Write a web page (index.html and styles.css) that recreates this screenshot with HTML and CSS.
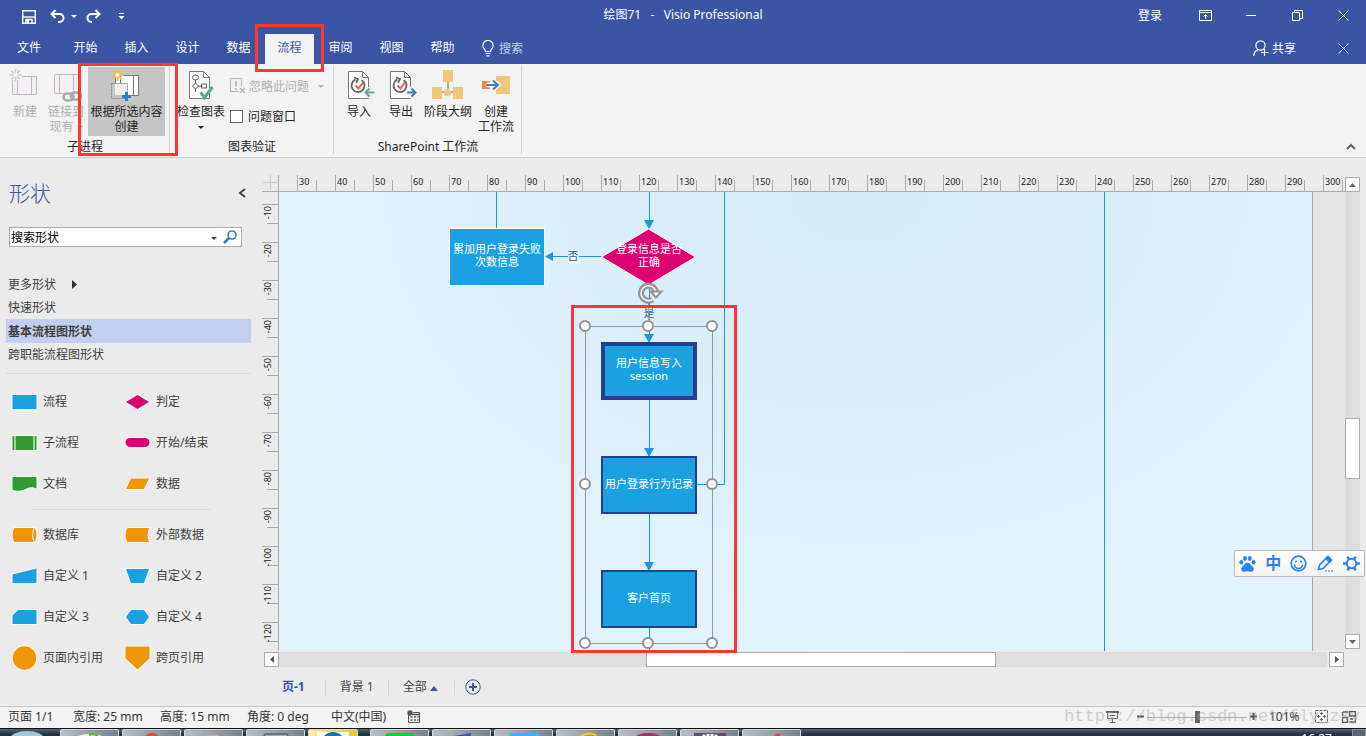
FILE: index.html
```html
<!DOCTYPE html>
<html lang="zh-CN">
<head>
<meta charset="utf-8">
<title>绘图71 - Visio Professional</title>
<link rel="stylesheet" href="styles.css">
</head>
<body>
<header class="header">
  <div class="titlebar">
    <div class="quick">
      <button class="q-save" aria-label="保存"><svg width="14" height="14" viewBox="0 0 14 14" fill="none" stroke="#fff"><path d="M.7.7h12.6v12.6H.7z" stroke-width="1.4"/><path d="M1 7h12" stroke-width="1.4"/><path d="M4 13v-3.500h6V13" stroke-width="1.400"/><path d="M5 10h2v3H5z" fill="#fff" stroke="none"/></svg></button>
      <button class="q-undo" aria-label="撤消"><svg width="15" height="15" viewBox="0 0 15 15" fill="none" stroke="#fff" stroke-width="2"><path d="M5.500 1L1.500 5l4 4"/><path d="M2 5h7.500a3.800 3.800 0 0 1 0 8H8"/></svg></button>
      <button class="q-drop" aria-label="撤消选项"><svg width="6" height="4" viewBox="0 0 6 4"><path d="M0 0h6L3 3z" fill="#fff"/></svg></button>
      <button class="q-redo" aria-label="恢复"><svg width="15" height="15" viewBox="0 0 15 15" fill="none" stroke="#fff" stroke-width="2"><path d="M9.500 1l4 4-4 4"/><path d="M13 5H5.500a3.800 3.800 0 0 0 0 8H6"/></svg></button>
      <button class="q-more" aria-label="自定义快速访问工具栏"><svg width="7" height="7" viewBox="0 0 7 7"><path d="M1 0h5v1H1zM.5 3h6L3.500 6.500z" fill="#fff"/></svg></button>
    </div>
    <h1 class="doc-title">绘图71&nbsp;&nbsp; -&nbsp;&nbsp; Visio Professional</h1>
    <div class="window-tools">
      <button class="sign-in">登录</button>
      <button class="win" aria-label="功能区显示选项"><svg width="13" height="11" viewBox="0 0 13 11" fill="none" stroke="#fff"><path d="M.5.500h12v10H.5zM.5 2.500h12M6.500 9V4.500M4.500 6.500l2-2 2 2"/></svg></button>
      <button class="win" aria-label="最小化"><svg width="11" height="11" viewBox="0 0 11 11"><path d="M0 5.500h10" stroke="#fff"/></svg></button>
      <button class="win" aria-label="还原"><svg width="11" height="11" viewBox="0 0 11 11" fill="none" stroke="#fff"><path d="M.5 2.500h7v8h-7zM2.500 2V.5h8v8H8"/></svg></button>
      <button class="win" aria-label="关闭"><svg width="11" height="11" viewBox="0 0 11 11"><path d="M.5.500l10 10M10.500.5l-10 10" stroke="#fff"/></svg></button>
    </div>
  </div>
  <nav class="tabs">
    <button class="tab tab-file">文件</button>
    <button class="tab">开始</button>
    <button class="tab">插入</button>
    <button class="tab">设计</button>
    <button class="tab">数据</button>
    <div class="marked"><button class="tab tab-active">流程</button><span class="mark mark-tab"></span></div>
    <button class="tab">审阅</button>
    <button class="tab">视图</button>
    <button class="tab">帮助</button>
    <button class="tell-me"><svg width="12" height="17" viewBox="0 0 12 17" fill="none" stroke="#fff" stroke-width="1.200"><path d="M3.500 11.500C3.500 9 .8 8.500.8 5.500a5.200 5 0 0 1 10.400 0c0 3-2.700 3.500-2.700 6z"/><path d="M3.500 13.500h5M4.500 15.800h3"/></svg><span>搜索</span></button>
    <button class="share"><svg width="16" height="17" viewBox="0 0 16 17" fill="none" stroke="#fff" stroke-width="1.200"><circle cx="7.500" cy="5.500" r="4.600"/><path d="M.8 16c0-3.500 1.800-5.500 4.200-6.200M11.500 9v7M8 12.500h7.500"/></svg>共享</button>
    <button class="win win-doc" aria-label="关闭窗口"><svg width="11" height="11" viewBox="0 0 11 11"><path d="M.5.500l10 10M10.500.5l-10 10" stroke="#fff"/></svg></button>
  </nav>
</header>

<section class="ribbon">
  <div class="group">
    <div class="group-body group-first">
      <button class="big w40" disabled>
        <svg width="32" height="36" viewBox="4 0 32 36" fill="none"><path d="M7.500 8.500h24v18h-24z" fill="#f5eff5" stroke="#bbb"/><path d="M12.500 6v20M26.500 8v18" stroke="#bbb"/><path d="M5 1h12v11H5z" fill="#f3f3f3"/><path d="M10.500 1v12M4.500 7h12M6.300 2.800l8.400 8.400M14.700 2.800l-8.400 8.400" stroke="#ccc" stroke-width="1.600"/><circle cx="10.500" cy="7" r="2.200" fill="#f3f3f3"/></svg>
        <span>新建</span></button>
      <button class="big w42" disabled>
        <svg width="32" height="36" viewBox="0 0 32 36" fill="none"><path d="M4.500 6.500h24v19h-24z" fill="#f5eff5" stroke="#bbb"/><path d="M9.500 6v19M23.500 6v19" stroke="#bbb"/><rect x="13.500" y="25.500" width="10" height="7" rx="3.500" stroke="#aaa" stroke-width="2.500"/><rect x="21" y="24.500" width="10" height="7" rx="3.500" stroke="#aaa" stroke-width="2.500"/></svg>
        <span>链接到<br>现有 <i class="caret"></i></span></button>
      <div class="marked">
        <button class="big selected">
          <svg width="32" height="36" viewBox="0 0 32 36" fill="none"><path d="M4.500 7.500h23v20h-23z" fill="#fff" stroke="#777"/><path d="M9.500 7v20M22.500 7v20" stroke="#777"/><path d="M0 15h17v16H0z" fill="#c5c5c5"/><path d="M4 15h13v12H4z" fill="#eee"/><path d="M.5 15.500h16v15H.5z" stroke="#888" stroke-dasharray="2 1"/><path d="M6.500 1v12M.5 7h12M2.300 2.800l8.400 8.400M10.700 2.800l-8.400 8.400" stroke="#f0b95c" stroke-width="2"/><circle cx="6.500" cy="7" r="2" fill="#fff"/><path d="M15.500 24v9M11 28.500h9" stroke="#3a7abd" stroke-width="3"/></svg>
          <span>根据所选内容<br>创建</span></button>
        <span class="mark mark-button"></span>
      </div>
    </div>
    <div class="group-name">子进程</div>
  </div>
  <div class="group">
    <div class="group-body group-second">
      <button class="big w54">
        <svg width="32" height="36" viewBox="0 0 32 36" fill="none" stroke="#777"><path d="M4.500 3.500h14l6 6v21h-20z" fill="#fff"/><path d="M18.500 3.500v6h6"/><ellipse cx="10.500" cy="9.500" rx="3" ry="2.500" stroke="#555"/><path d="M10.500 12v3l-3 3 3 3 3-3-3-3M13.500 18h4M16.500 16h5v4h-5zM10.500 21v3" stroke="#555"/><path d="M15.500 24.500l4 5L27.500 19" stroke="#5fa58c" stroke-width="3"/></svg>
        <span>检查图表<br><i class="caret"></i></span></button>
      <div class="stack">
        <button class="small" disabled><svg width="16" height="16" viewBox="0 0 16 16" fill="none" stroke="#b5b5b5"><path d="M.5.500h11v13H.5z" fill="#f5eff5"/><path d="M6 3v5.500M6 10v2" stroke-width="1.600"/><path d="M8.500 8.500h7v7h-7z" fill="#f3f3f3" stroke="none"/><path d="M10 10l5 5M15 10l-5 5" stroke-width="1.400"/></svg>忽略此问题<i class="caret"></i></button>
        <label class="small"><input type="checkbox">问题窗口</label>
      </div>
    </div>
    <div class="group-name">图表验证</div>
  </div>
  <div class="group">
    <div class="group-body group-third">
      <button class="big w42">
        <svg width="32" height="36" viewBox="0 0 32 36" fill="none"><path d="M5.500 3.500h14l6 6v21h-20z" fill="#fff" stroke="#777"/><path d="M19.500 3.500v6h6" stroke="#777"/><path d="M12.500 11.500a6.500 6.500 0 1 0 6 .5M11 9.500l4 1.500-2 4" stroke="#666" stroke-width="1.800"/><path d="M12.500 17.500l3 3 4.500-6" stroke="#e2633f" stroke-width="2"/><path d="M23 19h9v11h-9z" fill="#f3f3f3"/><path d="M22.500 24.500h9M26.500 20.500l-4 4 4 4" stroke="#6aa692" stroke-width="2"/></svg>
        <span>导入</span></button>
      <button class="big w42">
        <svg width="32" height="36" viewBox="0 0 32 36" fill="none"><path d="M5.500 3.500h14l6 6v21h-20z" fill="#fff" stroke="#777"/><path d="M19.500 3.500v6h6" stroke="#777"/><path d="M12.500 11.500a6.500 6.500 0 1 0 6 .5M11 9.500l4 1.500-2 4" stroke="#666" stroke-width="1.800"/><path d="M12.500 17.500l3 3 4.500-6" stroke="#e2633f" stroke-width="2"/><path d="M23 19h9v11h-9z" fill="#f3f3f3"/><path d="M22 24.500h8.500M26.500 20.500l4 4-4 4" stroke="#3f7fbd" stroke-width="2"/></svg>
        <span>导出</span></button>
      <button class="big w52">
        <svg width="32" height="36" viewBox="0 0 32 36" fill="#efc77c"><path d="M16 12v9M10 24h14" stroke="#666"/><path d="M11 2h10v12H11zM0 19h10v12H0zM21 19h10v12H21z"/><circle cx="15.500" cy="24.500" r="3.600"/></svg>
        <span>阶段大纲</span></button>
      <button class="big w44">
        <svg width="32" height="36" viewBox="0 0 32 36" fill="none"><path d="M2 13h8v8H2z" fill="#e88b44"/><path d="M16 8h14v18H16z" fill="#efc77c"/><path d="M6.500 17h11M13 12.500l5 4.500-5 4.500" stroke="#fff" stroke-width="4.500"/><path d="M6.500 17h11M13 12.500l5 4.500-5 4.500" stroke="#3f7fbd" stroke-width="2.200"/></svg>
        <span>创建<br>工作流</span></button>
    </div>
    <div class="group-name">SharePoint 工作流</div>
  </div>
  <button class="collapse" aria-label="折叠功能区"><svg width="10" height="7" viewBox="0 0 10 7"><path d="M1 6l4-4 4 4" fill="none" stroke="#666" stroke-width="2"/></svg></button>
</section>

<main class="workspace">
  <aside class="sidebar">
    <div class="side-head"><h2>形状</h2><button aria-label="最小化形状窗口"><svg width="8" height="10" viewBox="0 0 8 10"><path d="M7 1L2 5l5 4" fill="none" stroke="#444" stroke-width="2"/></svg></button></div>
    <form class="search">
      <input type="text" value="搜索形状" aria-label="搜索形状">
      <button type="button" class="search-drop" aria-label="搜索选项"><i class="caret"></i></button>
      <button type="button" class="search-go" aria-label="开始搜索"><svg width="15" height="14" viewBox="0 0 15 14" fill="none" stroke="#3d77b5"><circle cx="9" cy="5" r="4" stroke-width="1.600"/><path d="M6 8l-5 5" stroke-width="2.600"/></svg></button>
    </form>
    <ul class="stencils">
      <li><button>更多形状 <svg width="5" height="9" viewBox="0 0 5 9"><path d="M0 0l5 4.500L0 9z" fill="#333"/></svg></button></li>
      <li><button>快速形状</button></li>
      <li><button class="current">基本流程图形状</button></li>
      <li><button>跨职能流程图形状</button></li>
    </ul>
    <div class="shapes">
      <div class="shape"><svg width="25" height="24" viewBox="0 0 25 24"><path d="M.5 5h24v14H.5z" class="f-blue"/></svg>流程</div>
      <div class="shape"><svg width="25" height="24" viewBox="0 0 25 24"><path d="M12.500 5l11.500 7-11.500 7L1 12z" class="f-pink"/></svg>判定</div>
      <div class="shape"><svg width="25" height="24" viewBox="0 0 25 24"><path d="M.5 5h24v14H.5z" class="f-green"/><path d="M3 5v14M22 5v14" stroke="#c5e3c5" stroke-width="1.500"/></svg>子流程</div>
      <div class="shape"><svg width="25" height="24" viewBox="0 0 25 24"><rect x=".5" y="7" width="24" height="9" rx="4.500" class="f-pink"/></svg>开始/结束</div>
      <div class="shape"><svg width="25" height="24" viewBox="0 0 25 24"><path d="M.5 5h24v11.500c-5-2-7-1.500-11 .5s-8 2-13 1z" class="f-green"/></svg>文档</div>
      <div class="shape"><svg width="25" height="24" viewBox="0 0 25 24"><path d="M6 6.500h18L19 17H1z" class="f-orange"/></svg>数据</div>
    </div>
    <hr>
    <div class="shapes">
      <div class="shape"><svg width="25" height="24" viewBox="0 0 25 24"><path d="M2.500 5h20c2.500 3 2.500 11 0 14h-20c-2.500-3-2.500-11 0-14z" class="f-orange"/><path d="M22.500 5c-2.500 3-2.500 11 0 14" stroke="#fff" fill="none"/></svg>数据库</div>
      <div class="shape"><svg width="25" height="24" viewBox="0 0 25 24"><path d="M2.500 5h22c-2.500 3-2.500 11 0 14h-22c-2.500-3-2.500-11 0-14z" class="f-orange"/></svg>外部数据</div>
      <div class="shape"><svg width="25" height="24" viewBox="0 0 25 24"><path d="M.5 10.500l24-6V19H.5z" class="f-blue"/></svg>自定义 1</div>
      <div class="shape"><svg width="25" height="24" viewBox="0 0 25 24"><path d="M1 5h23l-5 14H6z" class="f-blue"/></svg>自定义 2</div>
      <div class="shape"><svg width="25" height="24" viewBox="0 0 25 24"><path d="M6 5h18.500v14H.5v-8.500z" class="f-blue"/></svg>自定义 3</div>
      <div class="shape"><svg width="25" height="24" viewBox="0 0 25 24"><path d="M6 5h13l5 7-5 7H6l-5-7z" class="f-blue"/></svg>自定义 4</div>
      <div class="shape"><svg width="25" height="24" viewBox="0 0 25 24"><circle cx="12.500" cy="12" r="11.800" class="f-orange"/></svg>页面内引用</div>
      <div class="shape"><svg width="25" height="24" viewBox="0 0 25 24"><path d="M.5.500h24v12l-12 11-12-11z" class="f-orange"/></svg>跨页引用</div>
    </div>
  </aside>

  <section class="editor">
    <div class="corner"><svg width="14" height="14" viewBox="0 0 14 14"><path d="M0 7.500h14M7.500 0v14" stroke="#ccc"/></svg></div>
    <div class="ruler-h"><span>30</span><span>40</span><span>50</span><span>60</span><span>70</span><span>80</span><span>90</span><span>100</span><span>110</span><span>120</span><span>130</span><span>140</span><span>150</span><span>160</span><span>170</span><span>180</span><span>190</span><span>200</span><span>210</span><span>220</span><span>230</span><span>240</span><span>250</span><span>260</span><span>270</span><span>280</span><span>290</span><span>300</span></div>
    <div class="ruler-v"><div><span>-10</span></div><div><span>-20</span></div><div><span>-30</span></div><div><span>-40</span></div><div><span>-50</span></div><div><span>-60</span></div><div><span>-70</span></div><div><span>-80</span></div><div><span>-90</span></div><div><span>-100</span></div><div><span>-110</span></div><div><span>-120</span></div></div>
    <div class="canvas">
      <div class="paper">
        <svg class="diagram" width="1033" height="460" viewBox="279 192 1033 460">
          <g fill="none" stroke="#1b98d5">
            <path d="M496.500 192v37M649.500 192v30M649.500 285v50M724.500 192v292.500H697M649.500 400v50M649.500 514v50M649.500 628v24M1104.500 192v460M602 256.500h-50"/>
          </g>
          <path d="M644 220h10l-5 9zM644 334h10l-5 9zM644 448h10l-5 9zM644 562h10l-5 9zM545 256.500l8-4.500v9z" fill="#1b98d5"/>
          <path d="M449.500 228.500h95v57h-95z" fill="#1ba1e2" stroke="#fff"/>
          <path d="M648.500 229l47 28-47 28-47-28z" fill="#dc0073" stroke="#fff"/>
          <path d="M568 250h11v13h-11z" fill="#eaf6fc"/>
          <path d="M643 307h11v12h-11z" fill="#eaf6fc"/>
          <path d="M603 344h92v54h-92z" fill="#1ba1e2" stroke="#243f92" stroke-width="4"/>
          <path d="M602 457h94v56h-94zM602 571h94v56h-94z" fill="#1ba1e2" stroke="#243f92" stroke-width="2"/>
          <g class="node-text">
            <text x="497" y="253">累加用户登录失败</text><text x="497" y="266">次数信息</text>
            <text x="649" y="253">登录信息是否</text><text x="649" y="266">正确</text>
            <text x="649" y="367">用户信息写入</text><text x="649" y="380">session</text>
            <text x="649" y="488">用户登录行为记录</text>
            <text x="649" y="602">客户首页</text>
            <text x="573" y="260" class="edge-text">否</text><text x="649" y="317" class="edge-text">是</text>
          </g>
          <path d="M585.500 326.500h127v317h-127zM648.500 326v-24" fill="none" stroke="#999"/>
          <g fill="#fff" stroke="#929292" stroke-width="2"><circle cx="585" cy="326" r="5"/><circle cx="648" cy="326" r="5"/><circle cx="712" cy="326" r="5"/><circle cx="585" cy="484" r="5"/><circle cx="712" cy="484" r="5"/><circle cx="585" cy="643" r="5"/><circle cx="648" cy="643" r="5"/><circle cx="712" cy="643" r="5"/></g>
          <g fill="none"><path d="M656 293a7.500 7.500 0 1 0-3.500 6.500" stroke="#929292" stroke-width="6"/><path d="M656 293a7.500 7.500 0 1 0-3.500 6.500" stroke="#fff" stroke-width="1.500"/><path d="M650.500 291.500h11l-5.500 6z" fill="#fff" stroke="#929292" stroke-width="2"/></g>
        </svg>
      </div>
    </div>
    <div class="scroll-v">
      <button aria-label="向上滚动"><svg width="7" height="4" viewBox="0 0 7 4"><path d="M0 4l3.500-4L7 4z" fill="#666"/></svg></button>
      <div class="track"><div class="thumb"></div></div>
      <button aria-label="向下滚动"><svg width="7" height="4" viewBox="0 0 7 4"><path d="M0 0h7L3.500 4z" fill="#666"/></svg></button>
    </div>
    <div class="scroll-h">
      <button aria-label="向左滚动"><svg width="4" height="7" viewBox="0 0 4 7"><path d="M4 0v7L0 3.500z" fill="#555"/></svg></button>
      <div class="track"><div class="thumb"></div></div>
      <button aria-label="向右滚动"><svg width="4" height="7" viewBox="0 0 4 7"><path d="M0 0v7l4-3.500z" fill="#555"/></svg></button>
    </div>
    <nav class="pages">
      <button class="page page-current">页-1</button>
      <button class="page">背景 1</button>
      <button class="page">全部 <svg width="8" height="5" viewBox="0 0 8 5"><path d="M0 5l4-5 4 5z" fill="#3955a3"/></svg></button>
      <button class="add" aria-label="插入页"><svg width="16" height="16" viewBox="0 0 16 16" fill="none" stroke="#3955a3"><circle cx="8" cy="8" r="7.200"/><path d="M8 4v8M4 8h8" stroke-width="2"/></svg></button>
    </nav>
    <span class="mark mark-selection"></span>
  </section>

  <div class="ime">
    <button aria-label="输入法"><svg width="17" height="16" viewBox="0 0 17 16" fill="#2f80f7"><ellipse cx="2.300" cy="6.200" rx="1.900" ry="2.300"/><ellipse cx="6" cy="2.500" rx="1.900" ry="2.400"/><ellipse cx="10.800" cy="2.500" rx="1.900" ry="2.400"/><ellipse cx="14.600" cy="6.200" rx="1.900" ry="2.300"/><path d="M8.500 6.500c2 0 3 2.500 5 4s2 5-1.500 5.200c-1.500 0-2-.5-3.500-.5s-2 .5-3.500.5C1.500 15.500 1.500 12 3.500 10.500s3-4 5-4z"/></svg></button>
    <button class="ime-lang">中</button>
    <button aria-label="表情"><svg width="17" height="17" viewBox="0 0 17 17" fill="none" stroke="#2f80f7" stroke-width="1.700"><circle cx="8.500" cy="8.500" r="7.300"/><path d="M4.500 9.500a4 4 0 0 0 8 0M5 6.500h2M10 6.500h2"/></svg></button>
    <button aria-label="手写"><svg width="17" height="17" viewBox="0 0 17 17" fill="none" stroke="#2f80f7" stroke-width="1.700"><path d="M1.500 14.500l1-4.500L10.500 2l3.500 3.500L6 13.500z"/><path d="M9 3.500L12.500 7l2-2L11 1.500z" fill="#2f80f7"/><path d="M8 16h8" stroke-width="1" stroke-dasharray="2 1"/></svg></button>
    <button aria-label="设置"><svg width="17" height="17" viewBox="0 0 17 17" fill="none" stroke="#2f80f7"><circle cx="8.500" cy="8.500" r="4.700" stroke-width="2"/><path d="M0 8.500h3.500M13.500 8.500H17M4.500 1.700L6 4.500M12.500 1.700L11 4.500M4.500 15.300L6 12.500M12.500 15.300L11 12.500" stroke-width="2.600"/></svg></button>
  </div>
</main>

<footer class="status">
  <span class="s-page">页面 1/1</span><span class="s-size">宽度: 25 mm</span><span class="s-size">高度: 15 mm</span><span class="s-size s-angle">角度: 0 deg</span><span class="s-lang">中文(中国)</span>
  <svg width="13" height="13" viewBox="0 0 13 13" fill="none" stroke="#555"><path d="M1.500 5v7.500h11v-10H6"/><path d="M5 4.500h7M3.500 7h2M7 7h2M10 7h1.500M3.500 10h2M7 10h2M10 10h1.500" stroke-width="1.500"/><circle cx="3" cy="3" r="2.700" fill="#555" stroke="none"/></svg>
  <div class="view-tools">
    <button aria-label="演示模式"><svg width="13" height="12" viewBox="0 0 13 12" fill="none" stroke="#666"><path d="M0 1h13" stroke-width="2"/><path d="M1.500 2v5.500h10V2M3.500 4.500h6M6.500 8v3M3.500 11.500h6"/></svg></button>
    <button class="z-out" aria-label="缩小"><svg width="7" height="7" viewBox="0 0 7 7"><path d="M0 3.500h7" stroke="#555" stroke-width="2"/></svg></button>
    <input type="range" min="0" max="100" value="51" aria-label="缩放">
    <button class="z-in" aria-label="放大"><svg width="7" height="7" viewBox="0 0 7 7"><path d="M0 3.500h7M3.500 0v7" stroke="#555" stroke-width="2"/></svg></button>
    <button class="z-value">101%</button>
    <button class="z-fit" aria-label="调整页面以适合窗口"><svg width="13" height="13" viewBox="0 0 13 13" fill="none" stroke="#666"><path d="M.5.500h12v12H.5z" stroke-dasharray="3 1"/><path d="M6.500 2v3M5 3.500h3M6.500 8v3M5 9.500h3M2 6.500h3M3.500 5v3M8 6.500h3M9.500 5v3"/></svg></button>
    <button aria-label="切换窗口"><svg width="14" height="12" viewBox="0 0 14 12" fill="none" stroke="#555"><path d="M1 1h5M.5 1v4M7.500 5h6V.5h-6zM.5 6.500h5v5h-5zM7.500 11h6V6.500M8 8h3" stroke-width="1.400"/></svg></button>
    <span class="watermark">https://blog.csdn.net/fly_zxy</span>
  </div>
</footer>

<div class="taskbar">
  <div class="orb"></div>
  <div class="task"><svg width="34" height="8" viewBox="0 0 34 8"><ellipse cx="17" cy="8" rx="14" ry="4" fill="#f2f5f2"/><path d="M16 5c5-2 10 0 9 4" stroke="#57b52e" stroke-width="2" fill="none"/></svg></div>
  <div class="task"><svg width="20" height="8" viewBox="0 0 20 8"><circle cx="10" cy="12" r="9" fill="#dc4a3a"/></svg></div>
  <div class="task"><svg width="20" height="8" viewBox="0 0 20 8"><path d="M2 5h12v3H2z" fill="#d9b25c"/></svg></div>
  <div class="task"><svg width="26" height="8" viewBox="0 0 26 8"><rect x="1" y="4" width="24" height="8" rx="2" fill="#aaa" stroke="#444"/></svg></div>
  <div class="task task-gold"><svg width="32" height="8" viewBox="0 0 32 8"><path d="M0 2h32v6H0z" fill="#fff"/><circle cx="16" cy="14" r="10" fill="none" stroke="#1e6fa8" stroke-width="4"/></svg></div>
  <div class="task"><svg width="30" height="8" viewBox="0 0 30 8"><rect y="3" width="30" height="8" rx="4" fill="#06d33d"/></svg></div>
  <div class="task"><svg width="24" height="8" viewBox="0 0 24 8"><path d="M4 6l17-3v5H4z" fill="#3955a3"/></svg></div>
  <div class="task"><svg width="30" height="8" viewBox="0 0 30 8"><rect y="3" width="30" height="8" rx="4" fill="#38b4ff"/></svg></div>
  <div class="task"><svg width="30" height="8" viewBox="0 0 30 8"><path d="M5 9c6-5 18-8 20-3" stroke="#f4cb20" stroke-width="2" fill="none"/></svg></div>
  <div class="task"><svg width="26" height="8" viewBox="0 0 26 8"><ellipse cx="13" cy="7" rx="12" ry="4" fill="#a8316d"/></svg></div>
  <div class="task"><svg width="32" height="8" viewBox="0 0 32 8"><path d="M0 3h32v5H0z" fill="#694a70"/><path d="M8 8l3-3M14 4v4M18 4v4M24 8l-3-3" stroke="#fff" stroke-width="3"/></svg></div>
  <div class="task"><svg width="20" height="8" viewBox="0 0 20 8"><path d="M11 8l3-4h4v4z" fill="#e7402c"/></svg></div>
  <time class="clock">16:27</time>
  <div class="show-desktop"></div>
</div>
</body>
</html>
```
FILE: styles.css
```css
* { box-sizing: border-box; }

body {
  margin: 0;
  height: 100vh;
  display: flex;
  flex-direction: column;
  overflow: hidden;
  background: #ebebeb;
  color: #262626;
  font: 12px/15px "Noto Sans", "Noto Sans CJK SC", sans-serif;
}

button {
  border: 0;
  padding: 0;
  margin: 0;
  background: none;
  color: inherit;
  font: inherit;
  white-space: nowrap;
}

svg { flex: none; }

.caret {
  display: inline-block;
  border: 3px solid transparent;
  border-top-color: currentColor;
  border-bottom: 0;
  vertical-align: 2px;
}

.marked { position: relative; display: flex; }
.mark { position: absolute; border: 3px solid #fe3534; pointer-events: none; z-index: 5; }
.mark-tab { left: -9px; top: -10px; width: 69px; height: 48px; }
.mark-button { left: -9px; top: -4px; width: 100px; height: 93px; }
.mark-selection { left: 309px; top: 147px; width: 166px; height: 348px; }

/* Title bar and tabs */
.header { background: #3955a3; color: #fff; }
.titlebar { display: grid; grid-template-columns: 1fr auto 1fr; height: 30px; }
.quick { display: flex; padding-left: 14px; }
.quick button, .win { display: flex; align-items: center; justify-content: center; }
.quick button { padding-top: 3px; }
.q-save { width: 30px; }
.q-undo { width: 26px; }
.q-drop { width: 7px; }
.q-redo { width: 32px; }
.q-more { width: 24px; }
.doc-title { margin: 0; font-size: 12px; font-weight: 400; line-height: 30px; }
.window-tools { display: flex; justify-content: flex-end; }
.sign-in { width: 64px; }
.win { width: 46px; }
.win-doc { padding-bottom: 2px; }

.tabs { display: flex; height: 34px; padding-top: 4px; }
.tab { width: 51px; padding-bottom: 3px; }
.tab-file { width: 58px; margin-right: 2px; }
.tab-active { width: 49px; margin: 0 1px; background: #f3f3f3; color: #3955a3; }
.tell-me { display: flex; align-items: center; gap: 5px; padding: 0 0 2px 14px; color: #c5d0ea; }
.share { display: flex; align-items: center; gap: 3px; margin-left: auto; padding: 0 24px 2px 0; }

/* Ribbon */
.ribbon { display: flex; background: #f3f3f3; border-bottom: 1px solid #d0d0d0; }
.group { margin-bottom: 3px; padding-top: 3px; position: relative; }
.group::after { content: ""; position: absolute; right: 0; top: 1px; bottom: 0; border-right: 1px solid #d4d4d4; }
.group-body { display: flex; min-height: 69px; }
.group-first { padding: 0 5px; }
.group-second { padding: 0 10px 0 4px; }
.group-third { padding: 0 4px; }
.big { display: flex; flex-direction: column; align-items: center; padding: 1px 0 2px; }
.big:disabled, .small:disabled { color: #b1b1b1; }
.w40 { width: 40px; }
.w42 { width: 42px; }
.w44 { width: 44px; }
.w52 { width: 52px; }
.w54 { width: 54px; }
.selected { width: 77px; margin-left: 1px; background: #c5c5c5; }
.stack { display: flex; flex-direction: column; gap: 14px; padding: 11px 0 0 2px; }
.small { display: flex; align-items: center; gap: 3px; height: 16px; }
.small .caret { margin-left: 6px; }
.small input { appearance: none; width: 13px; height: 13px; margin: 0 2px 0 0; border: 1px solid #666; background: #fff; }
.group-name { padding-top: 3px; text-align: center; }
.collapse { margin-left: auto; align-self: flex-end; padding: 0 10px 4px; }

/* Shapes pane */
.workspace { position: relative; flex: 1; min-height: 0; display: flex; }
.sidebar { flex: none; width: 262px; padding: 19px 11px 0 6px; color: #404040; }
.side-head { display: flex; justify-content: space-between; align-items: center; height: 32px; padding: 0 5px 0 3px; }
.side-head h2 { margin: 0; color: #3955a3; font-size: 21px; font-weight: 300; line-height: 30px; }
.search { display: flex; height: 20px; margin: 18px 9px 0 3px; border: 1px solid #ababab; background: #fff; }
.search input { flex: 1; min-width: 0; border: 0; padding: 0 1px; background: none; color: #000; font: inherit; outline: 0; }
.search-drop { width: 10px; }
.search-go { width: 22px; }
.search-go svg { display: block; margin: 0 auto; }
.stencils { list-style: none; margin: 26px 0 0; padding: 0 0 7px; border-bottom: 1px solid #dcdcdc; }
.stencils button { display: flex; align-items: center; gap: 16px; width: 100%; height: 23px; padding: 0 2px; text-align: left; }
.stencils .current { height: 24px; background: #c3cef1; font-weight: 700; }
.shapes { display: grid; grid-template-columns: 113px 1fr; grid-auto-rows: 41px; padding: 7px 0 0 6px; }
.shape { display: flex; align-items: center; gap: 6px; white-space: nowrap; }
.shape svg { overflow: visible; }
.sidebar hr { margin: 5px 40px 0 26px; border: 0; border-top: 1px solid #dcdcdc; }
.sidebar hr + .shapes { padding-top: 4px; }
.f-blue, .f-pink, .f-green, .f-orange { stroke: #fff; stroke-opacity: .6; stroke-width: 2; paint-order: stroke; }
.f-blue { fill: #1ba1e2; }
.f-pink { fill: #dc0073; }
.f-green { fill: #339933; }
.f-orange { fill: #f09609; }

/* Drawing area */
.editor {
  position: relative;
  flex: 1;
  min-width: 0;
  display: grid;
  grid-template-columns: 17px minmax(0, 1fr) 16px;
  grid-template-rows: 17px minmax(0, 1fr) 16px 39px;
  padding: 17px 5px 0 0;
}
.corner { border-right: 1px solid #ababab; border-bottom: 1px solid #ababab; }
.corner svg { display: block; margin-left: 1px; }
.ruler-h, .ruler-v { overflow: hidden; font-size: 9px; line-height: 13px; color: #222; }
.ruler-h { display: flex; padding-left: 18px; border-bottom: 1px solid #ababab; }
.ruler-h span {
  flex: none;
  width: 38px;
  padding-left: 1px;
  border-left: 1px solid #ababab;
  background: linear-gradient(#ababab, #ababab) 18px 5px / 1px 12px no-repeat;
}
.ruler-v { padding-top: 12px; border-right: 1px solid #ababab; }
.ruler-v div {
  height: 38px;
  padding-top: 1px;
  border-top: 1px solid #ababab;
  background: linear-gradient(#ababab, #ababab) 5px 18px / 12px 1px no-repeat;
}
.ruler-v span { display: block; width: 12px; writing-mode: vertical-rl; transform: rotate(180deg); line-height: 12px; }
.canvas { display: flex; overflow: hidden; background: #e6e6e6; padding-right: 32px; }
.paper {
  flex: 1;
  min-width: 0;
  overflow: hidden;
  border-right: 1px solid #ababab;
  background: radial-gradient(ellipse 60% 100% at 56% 0, #d3ecf9, #dceffa 55%, #e2f3fc);
}
.diagram { display: block; }
.node-text { fill: #fff; font-size: 11px; text-anchor: middle; }
.edge-text { fill: #17699c; }

.scroll-v { grid-column: 3; grid-row: 1 / 3; display: flex; flex-direction: column; padding: 2px 0; }
.scroll-h { grid-column: 1 / 3; display: flex; padding: 1px 1px 0 2px; }
.scroll-v button, .scroll-h button { display: flex; align-items: center; justify-content: center; width: 15px; height: 15px; border: 1px solid #ababab; background: #fff; }
.scroll-v .track { flex: 1; width: 15px; padding-top: 226px; background: #dedede; }
.scroll-h .track { flex: 1; height: 15px; margin-right: 2px; padding-left: 367px; background: #dedede; }
.thumb { border: 1px solid #ababab; background: #fff; }
.scroll-v .thumb { height: 61px; }
.scroll-h .thumb { width: 350px; height: 15px; }

.pages { grid-column: 1 / 4; display: flex; align-items: center; padding-left: 5px; color: #444; }
.page { height: 16px; padding: 0 14px; border-right: 1px solid #d8d8d8; }
.page-current { padding: 0 20px 0 15px; color: #3955a3; font-weight: 700; }
.page:nth-child(3) { padding-right: 16px; }
.add { display: flex; margin-left: 10px; }

/* Floating input-method bar */
.ime {
  position: absolute;
  right: 1px;
  bottom: 129px;
  z-index: 6;
  display: flex;
  justify-content: space-between;
  align-items: center;
  width: 131px;
  height: 27px;
  padding: 0 4px;
  border: 1px solid #bbb;
  border-radius: 2px;
  background: linear-gradient(#fff, #f3f3f5);
}
.ime button { display: flex; }
.ime-lang { color: #2f80f7; font-size: 16px; font-weight: 700; }

/* Status bar */
.status { display: flex; align-items: center; height: 22px; padding: 0 10px 2px 8px; border-top: 1px solid #c6c6c6; background: #f3f3f3; color: #333; white-space: nowrap; }
.s-page { width: 65px; }
.s-size { width: 87px; }
.s-angle { width: 84px; }
.s-lang { width: 76px; }
.view-tools { position: relative; display: flex; align-items: center; margin-left: auto; }
.view-tools button { display: flex; }
.z-out { margin-left: 18px; }
.view-tools input { appearance: none; width: 100px; height: 12px; margin: 0 3px; background: linear-gradient(#ababab, #ababab) 0 6px / 100% 1px no-repeat; }
.view-tools input::-webkit-slider-thumb { appearance: none; width: 5px; height: 12px; background: #666; }
.z-value { width: 58px; padding-left: 12px; }
.z-fit { margin-right: 14px; }
.watermark { position: absolute; right: -4px; top: -2px; color: #aaa; opacity: .5; font: 17px/20px "Liberation Mono", monospace; pointer-events: none; }

/* System taskbar */
.taskbar { display: flex; gap: 3px; height: 8px; overflow: hidden; padding-left: 10px; border-top: 1px solid #111; background: linear-gradient(#56677a, #27323f 5px); }
.orb { width: 34px; height: 16px; margin: 2px 13px 0 0; border-radius: 50%; background: #a9c5d8; flex: none; }
.task { flex: none; width: 59px; height: 12px; border: 1px solid #d5dade; border-radius: 2px; background: linear-gradient(90deg, #b8bec3, #77828c); text-align: center; }
.task svg { display: block; margin: 0 auto; }
.task-gold { width: 50px; margin-right: 9px; background: linear-gradient(90deg, #f9efa8, #e0c936); }
.clock { margin: 2px 17px 0 auto; color: #fff; }
.show-desktop { width: 14px; height: 12px; border: 1px solid #8a94a0; background: #5a6570; }
```
